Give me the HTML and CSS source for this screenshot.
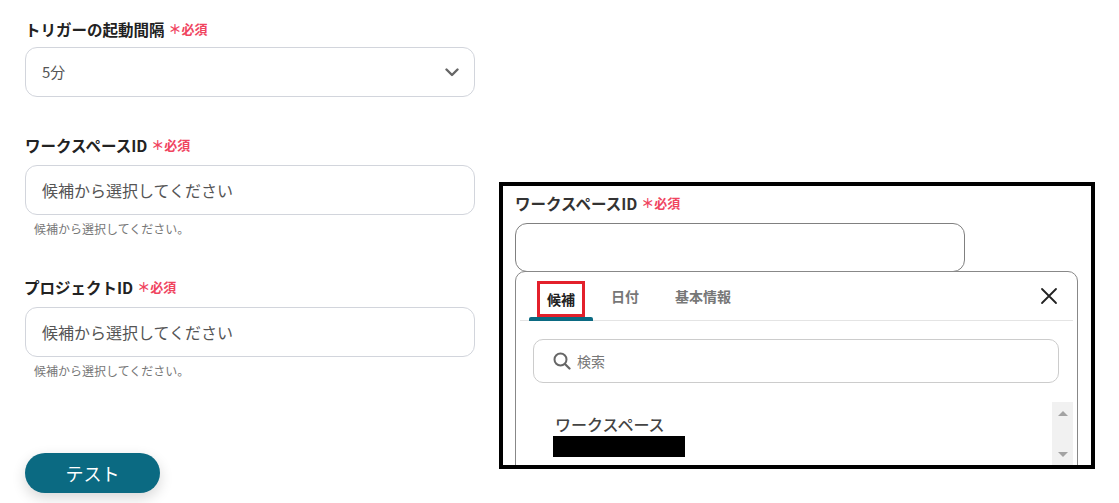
FILE: index.html
```html
<!DOCTYPE html>
<html lang="ja">
<head>
	<meta charset="UTF-8">
	<title>トリガー設定</title>
	<link rel="stylesheet" href="styles.css">
</head>
<body>

<div class="page">
	<div class="form">
		<div class="field field_first">
			<p class="lbl">トリガーの起動間隔<span class="req">＊必須</span></p>
			<div class="select">
				<span>5分</span>
				<svg class="chev" width="14" height="9" viewBox="0 0 14 9"><path d="M1.5 1.5 L7 7 L12.5 1.5" fill="none" stroke="#666" stroke-width="2.4" stroke-linecap="round" stroke-linejoin="round"/></svg>
			</div>
		</div>
		<div class="field field_ws">
			<p class="lbl">ワークスペースID<span class="req">＊必須</span></p>
			<div class="input">候補から選択してください</div>
			<p class="hint">候補から選択してください。</p>
		</div>
		<div class="field">
			<p class="lbl lbl_pj">プロジェクトID<span class="req">＊必須</span></p>
			<div class="input">候補から選択してください</div>
			<p class="hint">候補から選択してください。</p>
		</div>
		<a href="javascript:;" class="btn_test">テスト</a>
	</div>

	<!-- 候補タブの拡大 -->
	<div class="callout">
		<p class="lbl lbl_sm">ワークスペースID<span class="req">＊必須</span></p>
		<div class="input input_dark"></div>
		<div class="drop">
			<div class="tabs">
				<span class="tab tab_cur"><em class="mark">候補</em></span>
				<span class="tab">日付</span>
				<span class="tab">基本情報</span>
				<svg class="close" width="18" height="18" viewBox="0 0 18 18"><path d="M2 2 L16 16 M16 2 L2 16" stroke="#222" stroke-width="1.8" stroke-linecap="round"/></svg>
			</div>
			<div class="search">
				<svg width="18" height="18" viewBox="0 0 18 18"><circle cx="7.5" cy="7.5" r="6" fill="none" stroke="#666" stroke-width="2"/><path d="M12 12 L16.5 16.5" stroke="#666" stroke-width="2.2" stroke-linecap="round"/></svg>
				<span>検索</span>
			</div>
			<div class="list">
				<div class="items">
					<p class="item_ttl">ワークスペース</p>
					<div class="redact"></div>
				</div>
				<div class="sbar">
					<i class="arr_up"></i>
					<i class="arr_dn"></i>
				</div>
			</div>
		</div>
	</div>
</div>

</body>
</html>
```

FILE: styles.css
```css
*{margin:0; padding:0; box-sizing:border-box;}
body{ background:#fff; font-family:"Noto Sans CJK JP", "Noto Sans", sans-serif; color:#333; }
.page{ display:flex; align-items:flex-start; padding-left:25px; height:503px; overflow:hidden; }

/*左のフォーム*/
.form{ width:450px; padding-top:19px; }
.lbl{ display:flex; align-items:center; height:20px; font-size:15.5px; font-weight:bold; line-height:20px; color:#222; white-space:nowrap; }
.lbl_pj{ margin-left:-1px; }
.req{ font-size:13px; color:#f0455f; margin-left:4px; line-height:20px; }
.field_first{ margin-bottom:38px; }
.field_ws{ margin-bottom:40px; }
.select,
.input{ height:50px; border:1px solid #d2d5dc; border-radius:12px; margin-top:10px; padding-left:16px; font-size:16px; line-height:48px; color:#555; }
.select{ display:flex; align-items:center; justify-content:space-between; padding-right:15px; margin-top:8px; font-size:15px; }
.chev{ display:block; }
.hint{ font-size:12px; line-height:16px; color:#777; margin-top:6px; padding-left:9px; }
.btn_test{ display:block; width:135px; height:40px; margin-top:74px; border-radius:20px; background:#0b6a82; color:#fff; text-align:center; line-height:40px; font-size:18px; text-decoration:none; box-shadow:0 5px 14px rgba(0,0,0,.16); }

/*右の拡大図*/
.callout{ width:596px; height:287px; margin:182px 0 0 24px; border:4px solid #000; padding:7px 0 0 12px; overflow:hidden; }
.lbl_sm{ color:#333; }
.input_dark{ width:450px; height:49px; border-color:#808080; margin-top:10px; }
.drop{ width:563px; height:260px; margin-top:-1px; border:1px solid #888; border-radius:10px 10px 0 0; }
.tabs{ position:relative; display:flex; align-items:center; height:49px; margin:0 4px; padding-left:9px; border-bottom:1px solid #e4e4e4; }
.tab{ position:relative; padding:0 18px; font-size:14px; font-weight:bold; color:#777; line-height:24px; }
.tab_cur{ height:48px; padding:9px 8px 0 8px; color:#222; }
.tab_cur:after{ content:""; position:absolute; left:0; right:0; bottom:-1px; height:4px; border-radius:2px 2px 0 0; background:#0b6a82; }
.mark{ display:inline-block; font-style:normal; border:3px solid #e3202b; padding:3px 7px; line-height:24px; }
.close{ margin-left:auto; margin-right:15px; }

.search{ display:flex; align-items:center; gap:6px; height:44px; margin:18px 18px 0 17px; padding-left:19px; border:1px solid #ccc; border-radius:10px; font-size:14px; color:#777; }
.list{ display:flex; margin-top:19px; height:80px; }
.items{ flex:1; padding:11px 0 0 37px; }
.item_ttl{ font-size:16px; font-weight:500; line-height:22px; color:#444; padding-left:2px; }
.redact{ width:132px; height:21px; background:#000; margin-top:1px; }
.sbar{ position:relative; width:21px; margin-right:4px; background:#f1f1f1; }
.arr_up,
.arr_dn{ position:absolute; left:6px; width:0; height:0; border-left:5px solid transparent; border-right:5px solid transparent; }
.arr_up{ top:9px; border-bottom:5px solid #a3a3a3; }
.arr_dn{ top:50px; border-top:5px solid #a3a3a3; }
```
